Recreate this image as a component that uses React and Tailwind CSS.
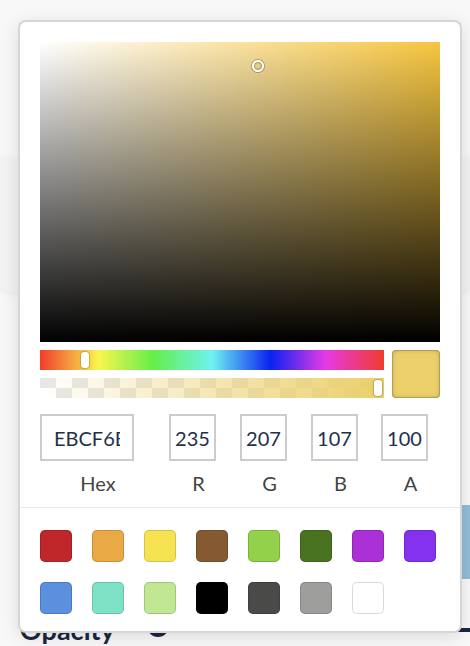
const SWATCHES = [
  'bg-[#c0272a]',
  'bg-[#e9a944]',
  'bg-[#f7e352]',
  'bg-[#855a30]',
  'bg-[#93d14a]',
  'bg-[#4a7321]',
  'bg-[#ab30d6]',
  'bg-[#8431f0]',
  'bg-[#5a90dd]',
  'bg-[#7de2c6]',
  'bg-[#c1e794]',
  'bg-[#000000]',
  'bg-[#4a4a48]',
  'bg-[#9e9e9c]',
  'bg-[#ffffff]',
]

function Field({ value, label, wide }) {
  return (
    <div className="flex flex-col">
      <input
        readOnly
        value={value}
        className={
          wide
            ? 'w-[94px] h-[47px] border-2 border-[#cccccc] px-3 text-[20px] text-[#24304a] outline-none'
            : 'w-[47px] h-[47px] border-2 border-[#cccccc] px-0 text-center text-[20px] text-[#24304a] outline-none'
        }
      />
      <div className={wide ? 'mt-2 pl-[22px] text-center text-[20px] leading-7 text-[#444444]' : 'mt-2 pl-3 text-center text-[20px] leading-7 text-[#444444]'}>
        {label}
      </div>
    </div>
  )
}

export default function App() {
  return (
    <div className="relative w-[470px] h-[646px] overflow-hidden bg-[#f8f8f8] font-['Lato',sans-serif]">
      {/* page behind the picker */}
      <div className="pt-[157px]">
        <div className="-mx-1 h-[135px] rounded-b-2xl bg-[#f3f3f3] shadow-[0_2px_6px_rgba(0,0,0,0.06)]" />
      </div>
      <div className="mt-[213px] flex justify-end">
        <div className="-mr-[40px] h-[74px] w-[60px] rounded-lg bg-[#93bcd7]" />
      </div>
      <div className="mt-[35px] flex items-start px-5">
        <span className="text-[27px] font-bold leading-8 text-[#1b2740]">Opacity</span>
        <span className="ml-[32px] mt-[1px] h-[22px] w-[22px] rounded-full bg-[#1b2740]" />
        <span className="-mr-5 ml-auto mt-[14px] h-[4px] w-[40px] bg-[#1b2740]" />
      </div>

      {/* colour picker popover */}
      <div className="absolute left-[18px] top-[20px] h-[613px] w-[444px] rounded-lg border-2 border-[#d6d6d6] bg-white shadow-[0_4px_18px_rgba(0,0,0,0.12)]">
        <div className="px-5 pt-5 pb-[10px]">
          <div className="relative h-[300px] w-[400px] bg-[#f6c540]">
            <div className="absolute inset-0 bg-[linear-gradient(to_right,#ffffff,rgba(255,255,255,0))]" />
            <div className="absolute inset-0 bg-[linear-gradient(to_top,#000000,rgba(0,0,0,0))]" />
            <div className="absolute left-[212px] top-[18px] h-3 w-3 rounded-full border-2 border-white shadow-[0_0_0_1px_rgba(0,0,0,0.25),inset_0_0_1px_1px_rgba(0,0,0,0.3)]" />
          </div>

          <div className="mt-2 flex gap-2">
            <div className="flex flex-1 flex-col gap-2">
              <div className="relative h-5 bg-[linear-gradient(to_right,#f03c2c_0%,#f9f54f_17%,#65ee4a_33%,#6ef2f2_50%,#0a22f0_67%,#e63ae6_83%,#f03c2c_100%)]">
                <div className="absolute left-[41px] top-[2px] h-4 w-2 rounded-[3px] bg-white shadow-[0_0_2px_rgba(0,0,0,0.6)]" />
              </div>
              <div className="relative h-5 bg-[conic-gradient(white_25%,#e8e8e8_0_50%,white_0_75%,#e8e8e8_0)] bg-[length:32px_20px]">
                <div className="absolute inset-0 bg-[linear-gradient(to_right,rgba(235,207,107,0),#ebcf6b)]" />
                <div className="absolute right-[2px] top-[2px] h-4 w-2 rounded-[3px] bg-white shadow-[0_0_2px_rgba(0,0,0,0.6)]" />
              </div>
            </div>
            <div className="h-12 w-12 rounded-[4px] bg-[#ebcf6b] shadow-[inset_0_0_0_1px_rgba(0,0,0,0.15),inset_0_0_4px_rgba(0,0,0,0.25)]" />
          </div>

          <div className="mt-4 flex">
            <Field value="EBCF6B" label="Hex" wide />
            <div className="ml-[35px]">
              <Field value="235" label="R" />
            </div>
            <div className="ml-6">
              <Field value="207" label="G" />
            </div>
            <div className="ml-6">
              <Field value="107" label="B" />
            </div>
            <div className="ml-[23px]">
              <Field value="100" label="A" />
            </div>
          </div>
        </div>

        <div className="border-t border-[#e8e8e8] px-5 pt-[22px]">
          <div className="grid grid-cols-[repeat(8,32px)] gap-5">
            {SWATCHES.map((c) => (
              <div key={c} className={`h-8 w-8 rounded-[5px] shadow-[inset_0_0_0_1px_rgba(0,0,0,0.15)] ${c}`} />
            ))}
          </div>
        </div>
      </div>
    </div>
  )
}
